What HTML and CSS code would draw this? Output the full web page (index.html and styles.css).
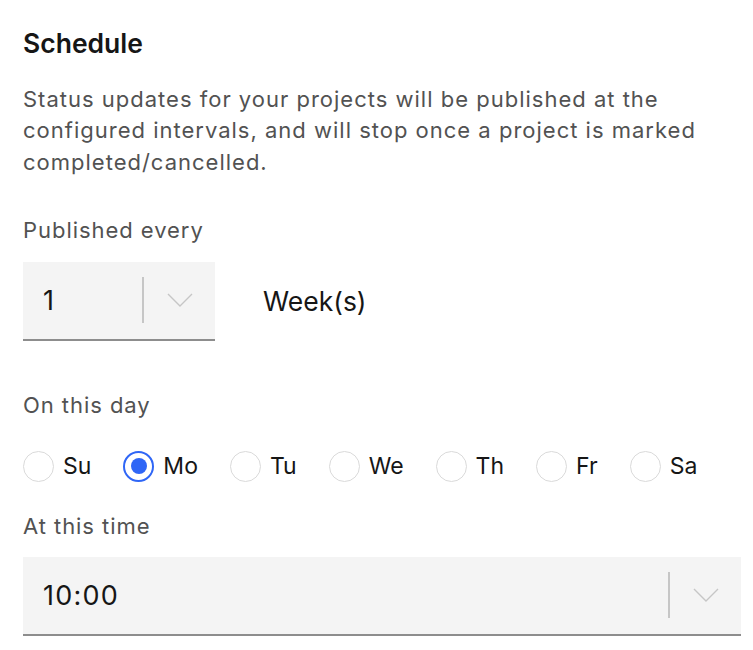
FILE: index.html
```html
<!DOCTYPE html>
<html lang="en">
<head>
<meta charset="utf-8">
<title>Schedule</title>
<link rel="stylesheet" href="styles.css">
</head>
<body>
<main class="panel">
  <h2 class="title">Schedule</h2>
  <p class="desc">Status updates for your projects will be published at the configured intervals, and will stop once a project is marked completed/cancelled.</p>

  <div class="label label-first">Published every</div>
  <div class="interval-row">
    <div class="select select-small">
      <span class="select-value">1</span>
      <span class="select-sep"></span>
      <span class="select-chev">
        <svg width="26" height="14" viewBox="0 0 26 14"><path d="M1 1 L13 13 L25 1" fill="none" stroke="#c6c6c6" stroke-width="1.4"/></svg>
      </span>
    </div>
    <span class="unit">Week(s)</span>
  </div>

  <div class="label label-day">On this day</div>
  <div class="radios">
    <label class="radio"><span class="circle"></span><span class="rlabel">Su</span></label>
    <label class="radio"><span class="circle checked"></span><span class="rlabel">Mo</span></label>
    <label class="radio"><span class="circle"></span><span class="rlabel">Tu</span></label>
    <label class="radio"><span class="circle"></span><span class="rlabel">We</span></label>
    <label class="radio"><span class="circle"></span><span class="rlabel">Th</span></label>
    <label class="radio"><span class="circle"></span><span class="rlabel">Fr</span></label>
    <label class="radio"><span class="circle"></span><span class="rlabel">Sa</span></label>
  </div>

  <div class="label label-time">At this time</div>
  <div class="select select-wide">
    <span class="select-value">10:00</span>
    <span class="select-sep"></span>
    <span class="select-chev">
      <svg width="26" height="14" viewBox="0 0 26 14"><path d="M1 1 L13 13 L25 1" fill="none" stroke="#c6c6c6" stroke-width="1.4"/></svg>
    </span>
  </div>
</main>
</body>
</html>
```

FILE: styles.css
```css
html, body {
  margin: 0;
  padding: 0;
  background: #ffffff;
}

body {
  font-family: "Inter", "Noto Sans", "Liberation Sans", sans-serif;
  color: #161616;
}

.panel {
  padding: 27px 12px 0 23px;
}

.title {
  margin: 0;
  font-size: 26.5px;
  font-weight: 600;
  line-height: 32px;
  color: #161616;
}

.desc {
  margin: 25px 0 0 0;
  font-size: 22px;
  letter-spacing: 1px;
  line-height: 31.3px;
  color: #525252;
  max-width: 690px;
}

.label {
  font-size: 22px;
  letter-spacing: 0.95px;
  line-height: 26px;
  color: #525252;
}

.label-first {
  margin-top: 39px;
}

.interval-row {
  display: flex;
  align-items: center;
  margin-top: 19px;
}

.select {
  display: flex;
  align-items: center;
  height: 77px;
  background: #f4f4f4;
  border-bottom: 2px solid #8d8d8d;
  box-sizing: content-box;
}

.select-small {
  width: 192px;
}

.select-wide {
  width: 718px;
  margin-top: 18px;
}

.select-value {
  flex: 1;
  padding-left: 20px;
  font-size: 27px;
  letter-spacing: 1.2px;
  color: #161616;
}

.select-sep {
  width: 2px;
  height: 46px;
  background: #c6c6c6;
}

.select-chev {
  width: 71px;
  display: flex;
  justify-content: center;
  align-items: center;
}

.unit {
  margin-left: 48px;
  font-size: 26.5px;
  color: #161616;
}

.label-day {
  margin-top: 51px;
}

.radios {
  display: flex;
  align-items: center;
  margin-top: 33px;
}

.radio {
  display: flex;
  align-items: center;
  margin-right: 32px;
}

.circle {
  width: 31px;
  height: 31px;
  box-sizing: border-box;
  border: 1.5px solid #dadada;
  border-radius: 50%;
  display: flex;
  align-items: center;
  justify-content: center;
}

.circle.checked {
  border: 2.5px solid #2f66f6;
}

.circle.checked::after {
  content: "";
  width: 16px;
  height: 16px;
  border-radius: 50%;
  background: #2f66f6;
}

.rlabel {
  margin-left: 9px;
  font-size: 23px;
  color: #161616;
}

.label-time {
  margin-top: 31px;
}
```
